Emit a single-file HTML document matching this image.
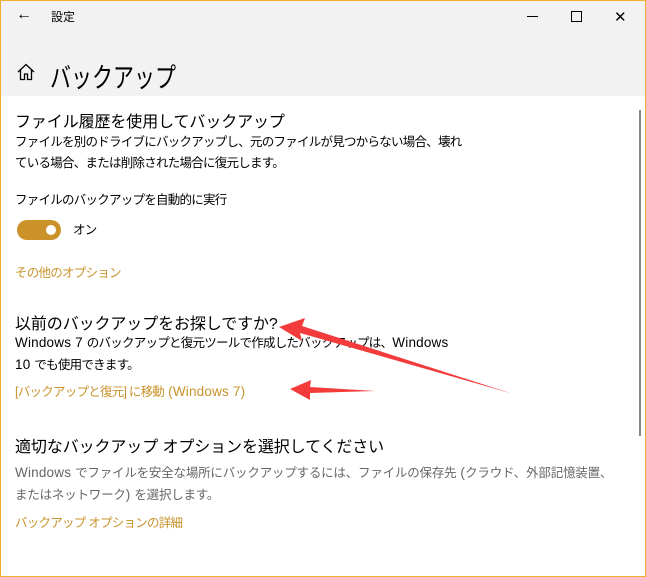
<!DOCTYPE html>
<html><head><meta charset="utf-8"><style>
body{margin:0;width:646px;height:577px;overflow:hidden;background:#fff;font-family:"Liberation Sans","Noto Sans CJK JP",sans-serif;color:#000;position:relative}
.frame{position:absolute;left:0;top:0;width:644px;height:575px;border:1px solid #f0ad2e}
.top{position:absolute;left:1px;top:1px;width:644px;height:95px;background:#f2f2f2}
.t{position:absolute;white-space:nowrap}
.h{font-size:16px;letter-spacing:-0.1px}
.b{font-size:12.5px;line-height:21px;letter-spacing:-0.75px}
.o{color:#c8922a;font-size:12.5px;letter-spacing:-0.75px}
.l{font-size:13.5px;letter-spacing:0.2px}
.g{color:#666;letter-spacing:-0.2px}
</style></head><body>
<div class="frame"></div>
<div class="top"></div>
<div class="t" style="left:16px;top:6px;font-size:16px">&#8592;</div>
<div class="t" style="left:51px;top:8px;font-size:12px">設定</div>
<div style="position:absolute;left:527px;top:16px;width:11px;height:1px;background:#000"></div>
<div style="position:absolute;left:571px;top:11px;width:9px;height:9px;border:1px solid #000"></div>
<div class="t" style="left:614px;top:8px;font-size:15px">&#10005;</div>
<svg style="position:absolute;left:17px;top:63px" width="18" height="18" viewBox="0 0 18 18"><path d="M1 9 L9 1.5 L17 9 M3.5 7 V16.5 H7.5 V11 H10.5 V16.5 H14.5 V7" fill="none" stroke="#000" stroke-width="1.3"/></svg>
<div class="t" style="left:50px;top:57px;font-size:21px;transform:scaleY(1.3);transform-origin:left top">バックアップ</div>
<div style="position:absolute;left:639px;top:110px;width:2px;height:326px;background:#888"></div>
<div class="t h" style="left:15px;top:108px">ファイル履歴を使用してバックアップ</div>
<div class="t b" style="left:15px;top:132px">ファイルを別のドライブにバックアップし、元のファイルが見つからない場合、壊れ<br>ている場合、または削除された場合に復元します。</div>
<div class="t b" style="left:15px;top:190px">ファイルのバックアップを自動的に実行</div>
<div style="position:absolute;left:17px;top:220px;width:44px;height:20px;border-radius:10px;background:#cc922a"></div>
<div style="position:absolute;left:46px;top:225px;width:10px;height:10px;border-radius:5px;background:#fff"></div>
<div class="t b" style="left:73px;top:220px">オン</div>
<div class="t o" style="left:15px;top:262px">その他のオプション</div>
<div class="t h" style="left:15px;top:310px">以前のバックアップをお探しですか?</div>
<div class="t b" style="left:15px;top:332px"><span class="l">Windows 7 </span>のバックアップと復元ツールで作成したバックアップは、<span class="l">Windows</span><br><span class="l">10 </span>でも使用できます。</div>
<div class="t o" style="left:15px;top:381px">[バックアップと復元] に移動<span class="l"> (Windows 7)</span></div>
<div class="t h" style="left:15px;top:433px">適切なバックアップ オプションを選択してください</div>
<div class="t b g" style="left:15px;top:462px"><span class="l">Windows </span>でファイルを安全な場所にバックアップするには、ファイルの保存先<span class="l"> (</span>クラウド、外部記憶装置、<br>またはネットワーク<span class="l">) </span>を選択します。</div>
<div class="t o" style="left:15px;top:512px">バックアップ オプションの詳細</div>
<svg style="position:absolute;left:0;top:0" width="646" height="577">
<polygon points="279,327 305,318 302,326 510,393 300,333 302,341" fill="#f33b3b"/>
<polygon points="290,389 311,380 310,387 375,391 310,393 310,400" fill="#f33b3b"/>
</svg>
</body></html>
